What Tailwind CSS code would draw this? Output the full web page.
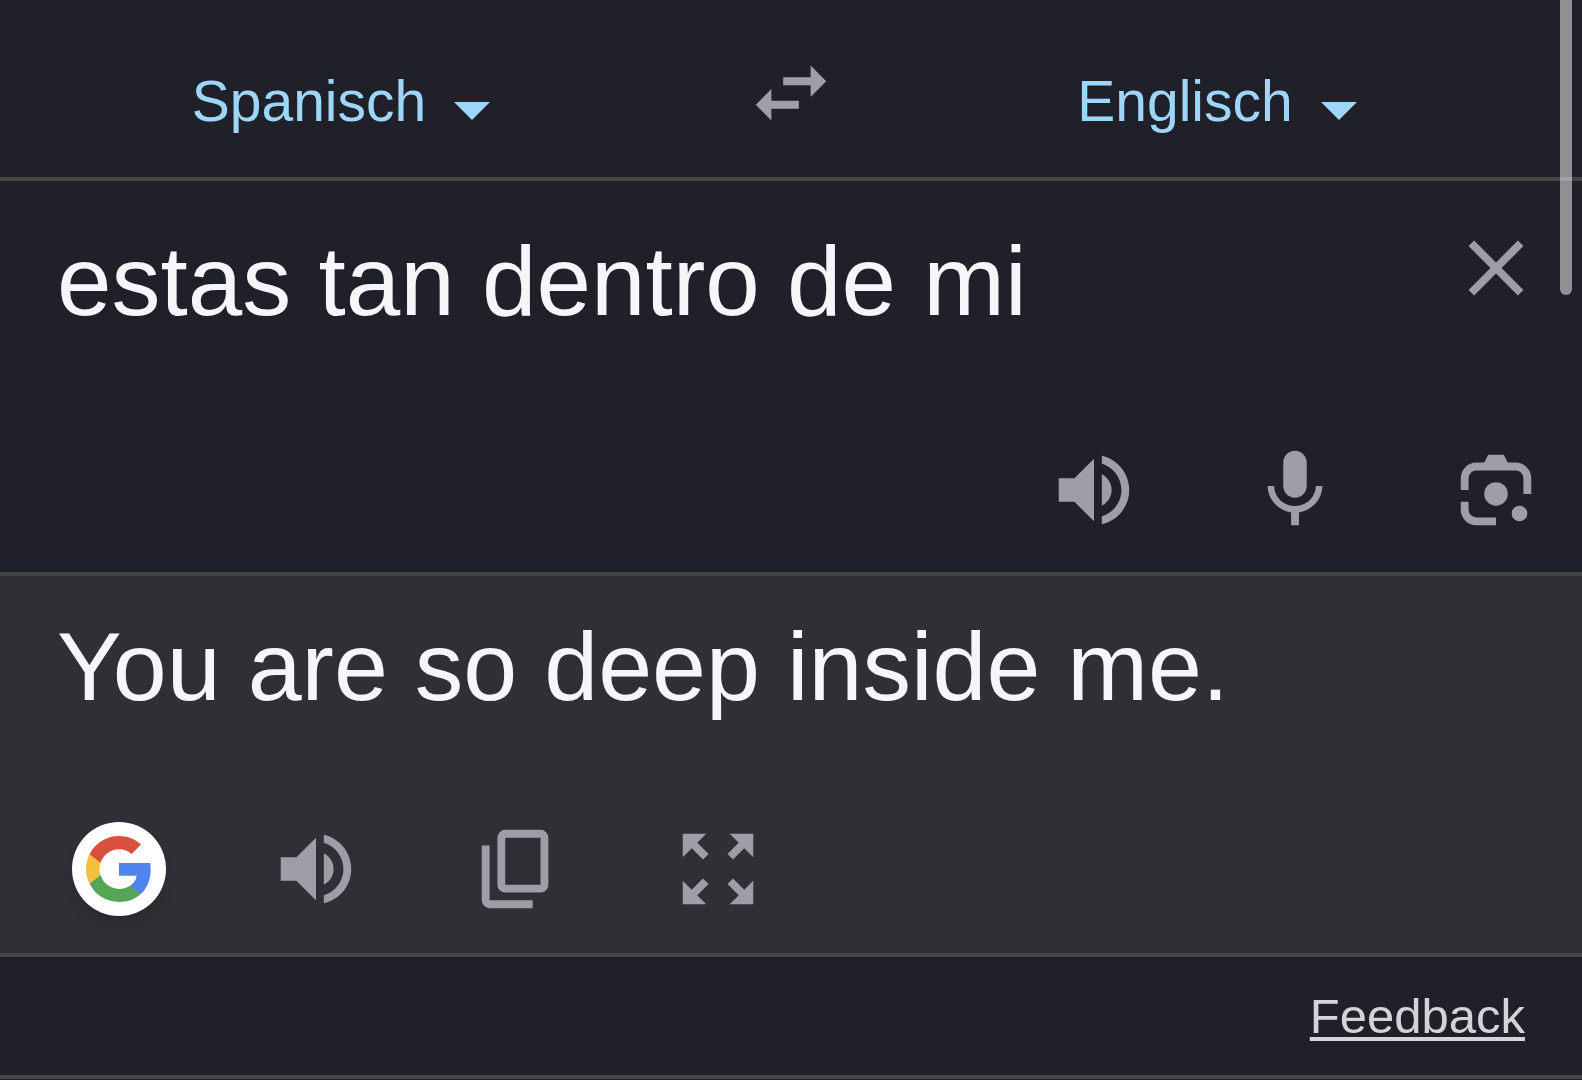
<!DOCTYPE html>
<html lang="de">
<head>
    <meta charset="UTF-8">
    <meta name="viewport" content="width=device-width, initial-scale=1.0">
    <title>Übersetzer</title>
    <!-- Tailwind CSS -->
    <script src="https://cdn.jsdelivr.net/npm/@tailwindcss/browser@4"></script>
</head>
<body class="relative min-h-screen overflow-x-hidden bg-[#202128] font-['Liberation_Sans',Arial,sans-serif] text-[#9e9ea8]">

    <!-- Sprachauswahl -->
    <header class="grid grid-cols-[1fr_218px_1fr] items-center border-b-4 border-[#454548] pt-[69px] pb-11 text-[57px] leading-[64px] text-[#9dd6fa]">
        <label for="quelle" class="flex items-center justify-center gap-7">
            <select id="quelle" aria-label="Ausgangssprache" class="field-sizing-content appearance-none outline-none">
                <option>Spanisch</option>
            </select>
            <svg class="mt-5 h-[18px] w-9" viewBox="0 0 36 18" fill="currentColor"><path d="M0 0h36L18 18z"/></svg>
        </label>
        <button type="button" id="tauschen" aria-label="Sprachen tauschen" class="-mt-6 -mb-2 justify-self-center text-[#9e9ea8]">
            <svg class="size-[94px]" viewBox="0 0 24 24" fill="currentColor"><path d="M6.99 11L3 15l3.99 4v-3H14v-2H6.99v-3zM21 9l-3.99-4v3H10v2h7.01v3L21 9z"/></svg>
        </button>
        <label for="ziel" class="flex items-center justify-center gap-7 pr-12">
            <select id="ziel" aria-label="Zielsprache" class="field-sizing-content appearance-none outline-none">
                <option>Englisch</option>
            </select>
            <svg class="mt-5 h-[18px] w-9" viewBox="0 0 36 18" fill="currentColor"><path d="M0 0h36L18 18z"/></svg>
        </label>
    </header>

    <!-- Eingabe -->
    <section class="border-b-4 border-[#454548] pt-10 pr-[39px] pb-[35px]">
        <div class="flex items-start">
            <label for="eingabe" class="min-w-0 flex-1 pt-[6px] pl-[57px]">
                <textarea id="eingabe" rows="2" aria-label="Text eingeben" spellcheck="false" class="block w-full resize-none overflow-hidden text-[98px] leading-[108px] text-[#f5f5fa] outline-none">estas tan dentro de mi</textarea>
            </label>
            <button type="button" id="loeschen" aria-label="Text löschen">
                <svg class="size-[94px]" viewBox="0 0 24 24" fill="currentColor"><path d="M19 6.41L17.59 5 12 10.59 6.41 5 5 6.41 10.59 12 5 17.59 6.41 19 12 13.41 17.59 19 19 17.59 13.41 12z"/></svg>
            </button>
        </div>
        <div class="flex justify-end gap-[107px]">
            <button type="button" aria-label="Anhören">
                <svg class="size-[94px]" viewBox="0 0 24 24" fill="currentColor"><path d="M3 9v6h4l5 5V4L7 9H3zm13.5 3c0-1.77-1.02-3.29-2.5-4.03v8.05c1.48-.73 2.5-2.25 2.5-4.02zM14 3.23v2.06c2.89.86 5 3.54 5 6.71s-2.11 5.85-5 6.71v2.06c4.01-.91 7-4.49 7-8.77s-2.99-7.86-7-8.77z"/></svg>
            </button>
            <button type="button" aria-label="Spracheingabe">
                <svg class="size-[94px]" viewBox="0 0 24 24" fill="currentColor"><path d="M12 14c1.66 0 3-1.34 3-3V5c0-1.66-1.34-3-3-3S9 3.34 9 5v6c0 1.66 1.34 3 3 3zm5.3-3c0 3-2.54 5.1-5.3 5.1S6.7 14 6.7 11H5c0 3.41 2.72 6.23 6 6.72V21h2v-3.28c3.28-.48 6-3.3 6-6.72h-1.7z"/></svg>
            </button>
            <button type="button" aria-label="Kamera">
                <svg class="size-[94px]" viewBox="0 0 24 24" fill="currentColor">
                    <path d="M3 12V9a4 4 0 0 1 4-4h2l1-2h4l1 2h2a4 4 0 0 1 4 4v4h-2V9a2 2 0 0 0-2-2H7a2 2 0 0 0-2 2v3z"/>
                    <path d="M3 15v2a4 4 0 0 0 4 4h5v-2H7a2 2 0 0 1-2-2v-2z"/>
                    <circle cx="12" cy="13" r="3"/>
                    <circle cx="18" cy="18" r="2"/>
                </svg>
            </button>
        </div>
    </section>

    <!-- Übersetzung -->
    <section class="border-b-4 border-[#454548] bg-[#2f3035] py-[37px]">
        <p id="ausgabe" class="px-[57px] text-[97px] leading-[108px] text-[#f5f5fa]">You are so deep inside me.</p>
        <div class="mt-[101px] flex items-center pl-[72px]">
            <button type="button" aria-label="Google-Suche" class="mr-[103px] flex size-[94px] items-center justify-center rounded-full bg-white shadow-lg">
                <svg class="size-[72px]" viewBox="0 0 24 24">
                    <path fill="#4f83ee" d="M22.56 12.25c0-.78-.07-1.53-.2-2.25H12v4.26h5.92c-.26 1.37-1.04 2.53-2.21 3.31v2.77h3.57c2.08-1.92 3.28-4.74 3.28-8.09z"/>
                    <path fill="#55a556" d="M12 23c2.97 0 5.46-.98 7.28-2.66l-3.57-2.77c-.98.66-2.23 1.06-3.71 1.06-2.86 0-5.29-1.93-6.16-4.53H2.18v2.84C3.99 20.53 7.7 23 12 23z"/>
                    <path fill="#f1bf42" d="M5.84 14.09c-.22-.66-.35-1.36-.35-2.09s.13-1.43.35-2.09V7.07H2.18C1.43 8.55 1 10.22 1 12s.43 3.45 1.18 4.93l3.66-2.84z"/>
                    <path fill="#d95040" d="M12 5.38c1.62 0 3.06.56 4.21 1.64l3.15-3.15C17.45 2.09 14.97 1 12 1 7.7 1 3.99 3.47 2.18 7.07l3.66 2.84c.87-2.6 3.3-4.53 6.16-4.53z"/>
                </svg>
            </button>
            <div class="flex gap-[107px]">
                <button type="button" aria-label="Übersetzung anhören">
                    <svg class="size-[94px]" viewBox="0 0 24 24" fill="currentColor"><path d="M3 9v6h4l5 5V4L7 9H3zm13.5 3c0-1.77-1.02-3.29-2.5-4.03v8.05c1.48-.73 2.5-2.25 2.5-4.02zM14 3.23v2.06c2.89.86 5 3.54 5 6.71s-2.11 5.85-5 6.71v2.06c4.01-.91 7-4.49 7-8.77s-2.99-7.86-7-8.77z"/></svg>
                </button>
                <button type="button" id="kopieren" aria-label="Kopieren">
                    <svg class="size-[94px]" viewBox="0 0 24 24" fill="currentColor">
                        <path fill-rule="evenodd" d="M9 2h9a2 2 0 0 1 2 2v12a2 2 0 0 1-2 2H9a2 2 0 0 1-2-2V4a2 2 0 0 1 2-2zm0 2v12h9V4z"/>
                        <path d="M3 6h2v14h11v2H5a2 2 0 0 1-2-2z"/>
                    </svg>
                </button>
                <button type="button" aria-label="Vollbild">
                    <svg class="size-[94px]" viewBox="0 0 24 24" fill="currentColor"><path d="M15 3l2.3 2.3-2.89 2.87 1.42 1.42L18.7 6.7 21 9V3zM3 9l2.3-2.3 2.87 2.89 1.42-1.42L6.7 5.3 9 3H3zm6 12l-2.3-2.3 2.89-2.87-1.42-1.42L5.3 17.3 3 15v6zm12-6l-2.3 2.3-2.87-2.89-1.42 1.42 2.89 2.87L15 21h6z"/></svg>
                </button>
            </div>
        </div>
    </section>

    <footer class="flex justify-end border-b-4 border-[#454548] py-[31px] pr-[57px]">
        <a href="#" class="text-[49px] leading-[56px] text-[#d4d4d8] underline decoration-4 underline-offset-4">Feedback</a>
    </footer>

    <!-- Scrollbalken -->
    <div class="absolute top-0 right-[10px] h-[295px] w-3 rounded-b-full bg-white/50"></div>

    <script>
        // Eingabefeld leeren
        document.getElementById('loeschen').addEventListener('click', function() {
            document.getElementById('eingabe').value = '';
        });

        // Übersetzung in die Zwischenablage kopieren
        document.getElementById('kopieren').addEventListener('click', function() {
            navigator.clipboard.writeText(document.getElementById('ausgabe').textContent);
        });
    </script>

</body>
</html>
